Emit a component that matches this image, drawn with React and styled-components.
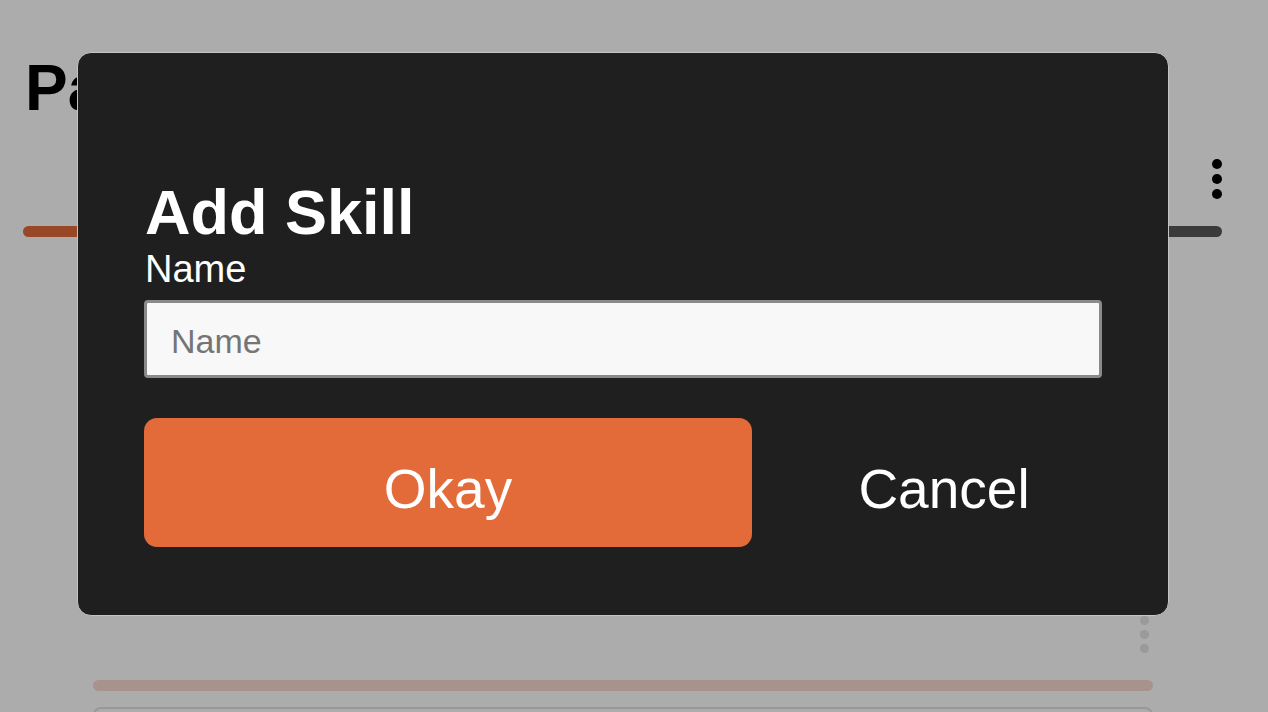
import React from 'react'
import styled, { createGlobalStyle } from 'styled-components'

const GlobalStyle = createGlobalStyle`
  html, body {
    margin: 0;
    padding: 0;
    background: #ffffff;
    font-family: 'Liberation Sans', Arial, Helvetica, sans-serif;
    overflow: hidden;
  }
`

function Kebab({ size, gap, color }) {
  return (
    <Dots $gap={gap}>
      <Dot $size={size} $color={color} />
      <Dot $size={size} $color={color} />
      <Dot $size={size} $color={color} />
    </Dots>
  )
}

function App() {
  return (
    <>
      <GlobalStyle />
      <Page>
        <Heading>Page</Heading>
        <Section>
          <MenuRow $pad={0}>
            <Kebab size={10} gap={5} color='#000' />
          </MenuRow>
          <Progress $fill='#e36b3a' $track='#585858' $value={4.5} />
          <Ghost>
            <MenuRow $pad={4}>
              <Kebab size={9} gap={5} color='#e4e4e4' />
            </MenuRow>
            <Progress $fill='#f8dbce' $track='#f8dbce' $value={100} />
            <GhostBox />
          </Ghost>
        </Section>
      </Page>

      <Overlay>
        <Dialog>
          <Title>Add Skill</Title>
          <Label htmlFor='skill-name'>Name</Label>
          <Input id='skill-name' placeholder='Name' />
          <Actions>
            <OkayButton>Okay</OkayButton>
            <CancelButton>Cancel</CancelButton>
          </Actions>
        </Dialog>
      </Overlay>
    </>
  )
}

const Page = styled.main`
  height: 712px;
  padding: 51px 46px 0 23px;
  box-sizing: border-box;
  overflow: hidden;
`

const Heading = styled.h1`
  margin: 0 0 0 2px;
  font-size: 64px;
  font-weight: 700;
  line-height: normal;
  color: #000;
`

const Section = styled.section`
  display: flex;
  flex-direction: column;
`

const MenuRow = styled.div`
  display: flex;
  justify-content: flex-end;
  padding-right: ${(p) => p.$pad}px;
`

const Dots = styled.div`
  display: flex;
  flex-direction: column;
  gap: ${(p) => p.$gap}px;
  margin-top: 34px;
`

const Dot = styled.span`
  display: block;
  width: ${(p) => p.$size}px;
  height: ${(p) => p.$size}px;
  border-radius: 50%;
  background: ${(p) => p.$color};
`

const Progress = styled.div`
  height: 11px;
  margin-top: 27px;
  border-radius: 6px;
  background: linear-gradient(
    to right,
    ${(p) => p.$fill} ${(p) => p.$value}%,
    ${(p) => p.$track} ${(p) => p.$value}%
  );
`

const Ghost = styled.div`
  margin: 345px 69px 0 70px;
  display: flex;
  flex-direction: column;
`

const GhostBox = styled.div`
  margin-top: 16px;
  height: 60px;
  border: 2px solid #e2e2e2;
  border-radius: 8px;
`

const Overlay = styled.div`
  position: fixed;
  inset: 0;
  background: rgba(0, 0, 0, 0.325);
  display: flex;
  align-items: flex-start;
  padding: 52px 0 0 77px;
  box-sizing: border-box;
`

const Dialog = styled.div`
  width: 1092px;
  height: 564px;
  flex-shrink: 0;
  box-sizing: border-box;
  padding: 123px 66px 68px 66px;
  background: #1f1f1f;
  border: 1px solid #c4c4c4;
  border-radius: 14px;
  color: #fff;
  display: flex;
  flex-direction: column;
`

const Title = styled.h2`
  margin: 0;
  font-size: 63px;
  font-weight: 700;
  line-height: normal;
  height: 73px;
  padding-left: 1px;
`

const Label = styled.label`
  display: block;
  font-size: 38px;
  line-height: normal;
  height: 44px;
  padding-left: 1px;
`

const Input = styled.input`
  margin-top: 9px;
  height: 79px;
  box-sizing: border-box;
  border: 3px solid #8a8a8a;
  border-radius: 4px;
  background: #f8f8f8;
  padding: 4px 24px 0;
  font-family: inherit;
  font-size: 34px;
  color: #222;
  outline: none;

  &::placeholder {
    color: #757575;
  }
`

const Actions = styled.div`
  margin-top: 40px;
  display: grid;
  grid-template-columns: 608px 1fr;
  gap: 34px;
`

const OkayButton = styled.button`
  height: 129px;
  border: none;
  border-radius: 13px;
  background: #e36b3a;
  color: #fff;
  font-family: inherit;
  font-size: 55px;
  padding: 12px 0 0;
  cursor: pointer;
`

const CancelButton = styled.button`
  height: 129px;
  border: none;
  background: transparent;
  color: #fff;
  font-family: inherit;
  font-size: 55px;
  padding: 12px 0 0;
  cursor: pointer;
`

export default App
